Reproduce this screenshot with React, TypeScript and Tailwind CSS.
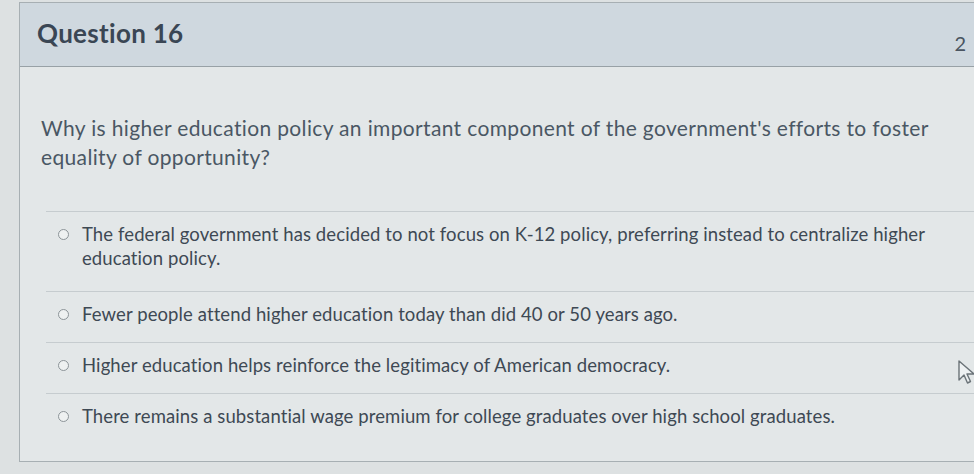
import React from "react";

const options = [
  ["The federal government has decided to not focus on K-12 policy, preferring instead to centralize higher", "education policy."],
  ["Fewer people attend higher education today than did 40 or 50 years ago."],
  ["Higher education helps reinforce the legitimacy of American democracy."],
  ["There remains a substantial wage premium for college graduates over high school graduates."],
];

function Radio() {
  return <span className="mt-[7px] h-[11px] w-[11px] shrink-0 rounded-full border-[1.5px] border-[#8c9498] bg-[#eef1f1]" />;
}

export default function App() {
  return (
    <div
      className="relative h-[474px] w-[974px] overflow-hidden bg-[#dde1e2] pl-[19px] pt-[2px]"
      style={{ fontFamily: "Lato, 'Open Sans', sans-serif" }}
    >
      <div className="h-[460px] border border-r-0 border-[#a7afb3] bg-[#e3e7e8]">
        {/* Header */}
        <div className="flex h-[64px] items-center justify-between border-b border-[#98a1a6] bg-[#cfd8df] pl-[17px] pr-[8px]">
          <h2 className="mb-[2px] text-[26px] font-bold tracking-[0.3px] text-[#3a4654]">Question 16</h2>
          <span className="mt-[16px] text-[20px] text-[#4a5561]">2</span>
        </div>

        {/* Body */}
        <div className="pl-[21px] pt-[46px]">
          <p className="text-[21px] leading-[29px] tracking-[0.35px] text-[#4a5764]">
            Why is higher education policy an important component of the government's efforts to foster
            <br />
            equality of opportunity?
          </p>

          <div className="ml-[5px] mt-[40px]">
            {options.map((lines, i) => (
              <div
                key={i}
                className={
                  "flex gap-[13px] border-t border-[#c6cccf] pl-[12px] " +
                  (i === 0 ? "h-[80px] pt-[10px]" : "h-[51px] pt-[10px]")
                }
              >
                <Radio />
                <span className="text-[18.5px] leading-[24px] tracking-[0.1px] text-[#3e4954]">
                  {lines.map((l, j) => (
                    <React.Fragment key={j}>
                      {j > 0 && <br />}
                      {l}
                    </React.Fragment>
                  ))}
                </span>
              </div>
            ))}
          </div>
        </div>
      </div>

      {/* mouse cursor */}
      <svg className="absolute left-[958px] top-[360px]" width="18" height="26" viewBox="0 0 18 26">
        <path d="M1 1 L1 20 L6 15 L9.5 23 L12.5 21.5 L9 14 L16 14 Z" fill="#eef1f2" stroke="#6b7378" strokeWidth="1.4" strokeLinejoin="round" />
      </svg>
    </div>
  );
}
